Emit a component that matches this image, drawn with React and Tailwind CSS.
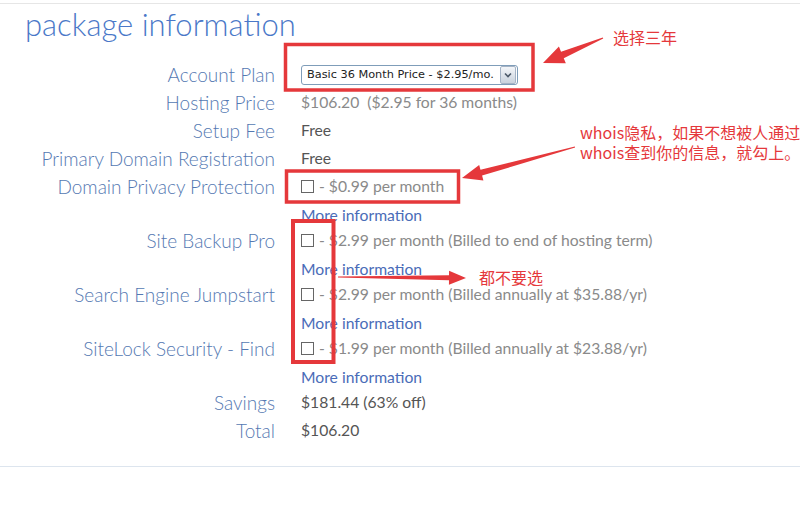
import React from "react";

const rows = [
  { label: "Account Plan", kind: "select" },
  { label: "Hosting Price", value: "$106.20\u00a0\u00a0($2.95 for 36 months)", tone: "light" },
  { label: "Setup Fee", value: "Free", tone: "dark" },
  { label: "Primary Domain Registration", value: "Free", tone: "dark" },
  { label: "Domain Privacy Protection", check: "- $0.99 per month", more: true },
  { label: "Site Backup Pro", check: "- $2.99 per month (Billed to end of hosting term)", more: true },
  { label: "Search Engine Jumpstart", check: "- $2.99 per month (Billed annually at $35.88/yr)", more: true },
  { label: "SiteLock Security - Find", check: "- $1.99 per month (Billed annually at $23.88/yr)", more: true },
  { label: "Savings", value: "$181.44 (63% off)", tone: "dark" },
  { label: "Total", value: "$106.20", tone: "dark" },
];

// tapered arrow like a screenshot annotation tool draws
function arrowPoints(tail, tip, headLen, headHalf, shaftHalf, tailHalf) {
  const dx = tip[0] - tail[0];
  const dy = tip[1] - tail[1];
  const len = Math.hypot(dx, dy);
  const ux = dx / len;
  const uy = dy / len;
  const px = -uy;
  const py = ux;
  const bx = tip[0] - ux * headLen;
  const by = tip[1] - uy * headLen;
  const pts = [
    [tail[0] + px * tailHalf, tail[1] + py * tailHalf],
    [bx + px * shaftHalf, by + py * shaftHalf],
    [bx + px * headHalf, by + py * headHalf],
    tip,
    [bx - px * headHalf, by - py * headHalf],
    [bx - px * shaftHalf, by - py * shaftHalf],
    [tail[0] - px * tailHalf, tail[1] - py * tailHalf],
  ];
  return pts.map((p) => p.join(",")).join(" ");
}

function Checkbox() {
  return <span className="inline-block w-[13px] h-[13px] border border-[#666] bg-white mr-[5px]" />;
}

function PlanSelect() {
  return (
    <div className="flex items-center w-[217px] h-[20px] border border-[#7f9db9] rounded-[3px] bg-white overflow-hidden">
      <span className="flex-1 pl-[5px] text-[11.3px] text-[#222] font-['DejaVu_Sans',sans-serif] whitespace-nowrap leading-none">
        Basic 36 Month Price - $2.95/mo.
      </span>
      <span className="flex items-center justify-center w-[16px] h-[18px] mr-[1px] border border-[#a5b3c5] rounded-[2px] bg-gradient-to-b from-[#f4f6f9] to-[#c9d2dd]">
        <svg width="8" height="6" viewBox="0 0 8 6">
          <path d="M1 1.5 L4 4.5 L7 1.5" fill="none" stroke="#4d5a6a" strokeWidth="1.6" />
        </svg>
      </span>
    </div>
  );
}

export default function App() {
  return (
    <div className="relative w-[800px] h-[515px] bg-white font-['Lato',sans-serif] overflow-hidden">
      <div className="mt-[3px] border-t border-b border-t-[#e6e6e6] border-b-[#dde5ee] pb-[21px]">
        <h1 className="pl-[25px] h-[40px] text-[31px] leading-[40px] font-light text-[#4a78c8]">
          package information
        </h1>
        <div className="mt-[17px]">
          {rows.map((row) => (
            <div key={row.label} className="flex">
              <div className="w-[275px] h-[28px] flex items-center justify-end text-[19px] font-light text-[#5579b2] whitespace-nowrap">
                {row.label}
              </div>
              <div className="pl-[26px] flex flex-col">
                <div className="h-[28px] flex items-center text-[15.7px] whitespace-nowrap">
                  {row.kind === "select" && <PlanSelect />}
                  {row.value && (
                    <span className={row.tone === "dark" ? "text-[#555]" : "text-[#8a8a8a]"}>{row.value}</span>
                  )}
                  {row.check && (
                    <span className="flex items-center text-[#8a8a8a]">
                      <Checkbox />
                      {row.check}
                    </span>
                  )}
                </div>
                {row.more && (
                  <a href="#" className="h-[26px] pt-[2px] leading-[24px] text-[15.7px] text-[#4a6cb8]">
                    More information
                  </a>
                )}
              </div>
            </div>
          ))}
        </div>
      </div>

      {/* annotations */}
      <svg className="absolute inset-0 pointer-events-none" width="800" height="515">
        <g fill="none" stroke="#e5383b">
          <rect x="285.5" y="44.5" width="247.5" height="45.5" strokeWidth="3.5" />
          <rect x="286.5" y="171" width="172" height="31" strokeWidth="3.5" />
          <rect x="293" y="221" width="40.5" height="141" strokeWidth="4" />
        </g>
        <g fill="#e5383b">
          <polygon points={arrowPoints([603, 38], [543, 63], 21, 9, 3.5, 0.6)} />
          <polygon points={arrowPoints([575, 147], [462, 178], 20, 8, 3, 0.6)} />
          <polygon points={arrowPoints([338, 277], [466, 278], 17, 7, 2.5, 0.6)} />
        </g>
      </svg>
      <div className="absolute left-[613px] top-[27px] text-[16px] leading-[20px] text-[#e5383b] font-['Noto_Sans_CJK_SC',sans-serif]">
        选择三年
      </div>
      <div className="absolute left-[580px] top-[122px] text-[16px] leading-[20px] text-[#e5383b] font-['Noto_Sans_CJK_SC',sans-serif] whitespace-nowrap">
        <div>whois隐私，如果不想被人通过</div>
        <div>whois查到你的信息，就勾上。</div>
      </div>
      <div className="absolute left-[479px] top-[269px] text-[16px] leading-[16px] text-[#e5383b] font-['Noto_Sans_CJK_SC',sans-serif]">
        都不要选
      </div>
    </div>
  );
}
